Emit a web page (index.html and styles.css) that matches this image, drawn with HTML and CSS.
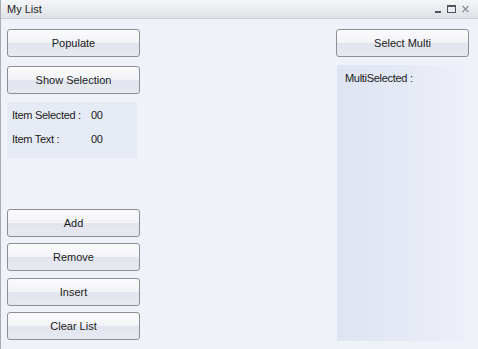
FILE: index.html
```html
<!DOCTYPE html>
<html>
<head>
<meta charset="utf-8">
<link rel="stylesheet" href="styles.css">
</head>
<body>
<div class="window">
  <div class="titlebar">
    <span class="title">My List</span>
    <div class="controls">
      <svg width="8" height="10" viewBox="0 0 8 10"><rect x="1" y="7" width="6" height="2" fill="#4f545c"/></svg>
      <svg width="11" height="10" viewBox="0 0 11 10"><rect x="1.5" y="1.5" width="8" height="7" fill="none" stroke="#4f545c" stroke-width="1"/><rect x="1" y="1" width="9" height="2" fill="#4f545c"/></svg>
      <svg width="9" height="10" viewBox="0 0 9 10"><path d="M1.5 2 L7.5 8 M7.5 2 L1.5 8" stroke="#8a9099" stroke-width="1.2"/></svg>
    </div>
  </div>
  <div class="content">
    <div class="left">
      <button class="btn">Populate</button>
      <button class="btn btn-second">Show Selection</button>
      <div class="info">
        <div class="info-row"><span class="label">Item Selected :</span><span class="value">00</span></div>
        <div class="info-row"><span class="label">Item Text :</span><span class="value">00</span></div>
      </div>
      <div class="bottom-buttons">
        <button class="btn">Add</button>
        <button class="btn">Remove</button>
        <button class="btn btn-insert">Insert</button>
        <button class="btn">Clear List</button>
      </div>
    </div>
    <div class="right">
      <button class="btn">Select Multi</button>
      <div class="multi">MultiSelected :</div>
    </div>
  </div>
</div>
</body>
</html>
```
FILE: styles.css
```css
html, body {
  margin: 0;
  padding: 0;
}
body {
  width: 478px;
  height: 349px;
  overflow: hidden;
  font-family: "Liberation Sans", Arial, sans-serif;
  font-size: 11px;
  color: #1a1a1a;
}
.window {
  width: 478px;
  height: 349px;
  box-sizing: border-box;
  background: #eff2f8;
  border-left: 1px solid #a9adb3;
  display: flex;
  flex-direction: column;
}
.titlebar {
  height: 19px;
  box-sizing: border-box;
  background: linear-gradient(#f4f5f7, #dfe2e7);
  border-bottom: 1px solid #c9cdd3;
  display: flex;
  align-items: center;
  padding: 0 8px 0 6px;
}
.title {
  font-size: 11px;
  color: #1c1c1c;
}
.controls {
  margin-left: auto;
  display: flex;
  gap: 4px;
  align-items: center;
}
.content {
  flex: 1;
  display: flex;
  padding: 10px 9px 0 6px;
}
.left {
  width: 133px;
  display: flex;
  flex-direction: column;
}
.btn {
  display: block;
  width: 133px;
  height: 28px;
  box-sizing: border-box;
  border: 1px solid #8d8f93;
  border-radius: 3px;
  background: linear-gradient(#fbfbfd 0%, #f2f3f7 50%, #e2e5ed 52%, #e6e9f0 100%);
  font-family: "Liberation Sans", Arial, sans-serif;
  font-size: 11px;
  color: #1a1a1a;
  padding: 0;
}
.btn-second {
  margin-top: 9px;
}
.info {
  margin-top: 8px;
  width: 130px;
  height: 56px;
  box-sizing: border-box;
  background: #e6eaf4;
  padding: 7px 0 0 5px;
  display: flex;
  flex-direction: column;
  gap: 12px;
}
.info-row {
  display: flex;
  font-size: 11px;
  letter-spacing: -0.3px;
}
.label {
  width: 79px;
}
.bottom-buttons {
  margin-top: auto;
  margin-bottom: 9px;
  display: flex;
  flex-direction: column;
  gap: 6px;
}
.btn-insert {
  margin-top: 1px;
}
.right {
  margin-left: auto;
  width: 133px;
  display: flex;
  flex-direction: column;
}
.multi {
  margin: 8px 0 8px 1px;
  width: 128px;
  flex: 1;
  box-sizing: border-box;
  background: linear-gradient(90deg, #dfe4f3, #e5e9f5 50%, #edf0f9);
  padding: 7px 0 0 8px;
  font-size: 11px;
  letter-spacing: -0.3px;
}
```
